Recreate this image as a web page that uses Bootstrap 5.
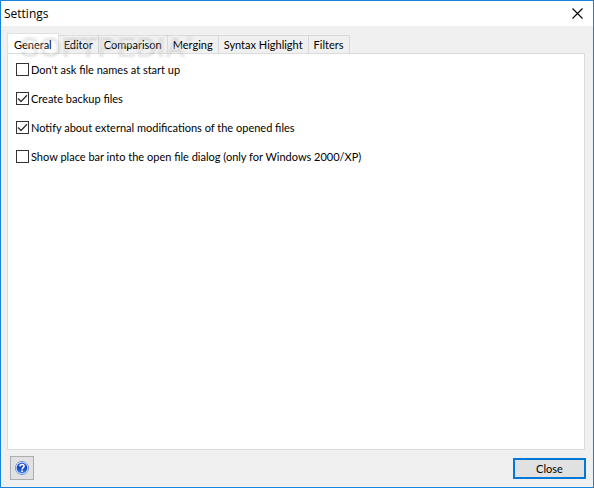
<!DOCTYPE html>
<html lang="en">
<head>
<meta charset="utf-8">
<meta name="viewport" content="width=device-width, initial-scale=1">
<title>Settings</title>
<link href="https://cdn.jsdelivr.net/npm/bootstrap@5.3.0/dist/css/bootstrap.min.css" rel="stylesheet">
<style>
body { font-family: Lato, Roboto, "Noto Sans", sans-serif; font-size: 11px; line-height: 13px; color: #000; }
.window { background: #f0f0f0; border: 1px solid #1883d7; }
.titlebar { height: 25px; padding-left: 3px; background: #fff; }
.titlebar h1 { font: 12px/16px "Open Sans", "Noto Sans", sans-serif; }
.title-close { width: 32px; height: 25px; }
.window-main { padding: 7px 8px 0 6px; }
.sheet-tabs { --bs-nav-tabs-border-width: 0; height: 20px; }
.sheet-tabs .nav-link { height: 18px; padding: 0 5px; font-size: 11px; line-height: 18px; color: #000; border: 1px solid #d9d9d9; border-left-width: 0; border-bottom: 0; border-radius: 0; margin: 0; background: #f0f0f0; }
.sheet-tabs .nav-link.active { height: 21px; padding: 0 6px; border-left-width: 1px; line-height: 17px; color: #000; background: #fff; }
.sheet { padding: 9px 8px; background: #fff; border: 1px solid #dcdcdc; gap: 16px; }
.option { gap: 2px; }
.option .form-check-input { width: 13px; height: 13px; margin: 0; border: 1px solid #333; border-radius: 0; background-color: #fff; box-shadow: none; flex: none; }
.option .form-check-input:checked { background-size: 11px 11px; background-image: url("data:image/svg+xml,%3Csvg xmlns='http://www.w3.org/2000/svg' viewBox='0 0 11 11'%3E%3Cpath d='M1 5.5 4 8.5 10 2.3' fill='none' stroke='%23333' stroke-width='1.3'/%3E%3C/svg%3E"); }
.window-footer { padding: 6px 7px 7px 9px; }
.help-btn { width: 24px; height: 24px; background: #e1e1e1; border: 1px solid #adadad; border-radius: 0; }
.close-btn { width: 73px; height: 21px; font-size: 11px; line-height: 13px; color: #000; background: #e1e1e1; border: 2px solid #0078d7; border-radius: 0; }
.watermark { left: 19px; top: 27px; font: bold 29px/34px "Liberation Sans", sans-serif; color: rgba(255,255,255,.25); text-shadow: 0 2px 2px rgba(0,0,0,.1); pointer-events: none; }
.watermark sup { font-size: 9px; top: -15px; }
</style>
<script src="https://cdn.jsdelivr.net/npm/bootstrap@5.3.0/dist/js/bootstrap.bundle.min.js" defer></script>
</head>
<body>
<div class="window d-flex flex-column min-vh-100 position-relative">
  <header class="titlebar d-flex align-items-center justify-content-between">
    <h1 class="m-0">Settings</h1>
    <button type="button" class="title-close btn p-0 border-0 rounded-0 d-flex align-items-center justify-content-center" aria-label="Close window">
      <svg width="11" height="11" viewBox="0 0 11 11" aria-hidden="true"><path d="M.5.5l10 10M10.5.5l-10 10" stroke="#000" stroke-width="1.1" fill="none"/></svg>
    </button>
  </header>
  <main class="window-main d-flex flex-column flex-grow-1">
    <div class="sheet-tabs nav nav-tabs flex-nowrap align-items-end" role="tablist">
      <button type="button" class="nav-link active align-self-start" role="tab" aria-selected="true" aria-controls="general" id="general-tab">General</button>
      <button type="button" class="nav-link" role="tab" aria-selected="false">Editor</button>
      <button type="button" class="nav-link" role="tab" aria-selected="false">Comparison</button>
      <button type="button" class="nav-link" role="tab" aria-selected="false">Merging</button>
      <button type="button" class="nav-link" role="tab" aria-selected="false">Syntax Highlight</button>
      <button type="button" class="nav-link" role="tab" aria-selected="false">Filters</button>
    </div>
    <section class="sheet d-flex flex-column flex-grow-1" id="general" role="tabpanel" aria-labelledby="general-tab">
      <div class="option d-flex align-items-center"><input class="form-check-input" type="checkbox" id="ask"><label for="ask">Don't ask file names at start up</label></div>
      <div class="option d-flex align-items-center"><input class="form-check-input" type="checkbox" id="backup" checked><label for="backup">Create backup files</label></div>
      <div class="option d-flex align-items-center"><input class="form-check-input" type="checkbox" id="notify" checked><label for="notify">Notify about external modifications of the opened files</label></div>
      <div class="option d-flex align-items-center"><input class="form-check-input" type="checkbox" id="placebar"><label for="placebar">Show place bar into the open file dialog (only for Windows 2000/XP)</label></div>
    </section>
  </main>
  <footer class="window-footer d-flex align-items-center justify-content-between">
    <button type="button" class="help-btn btn p-0 d-flex align-items-center justify-content-center" aria-label="Help">
      <svg width="14" height="14" viewBox="0 0 14 14" aria-hidden="true">
        <defs><linearGradient id="ball" x2="0" y2="1"><stop stop-color="#2e5fd0"/><stop offset=".5" stop-color="#1746bd"/><stop offset="1" stop-color="#3f86ee"/></linearGradient></defs>
        <circle cx="7" cy="7" r="6.6" fill="#e6efff" stroke="#5c86d8" stroke-width=".8"/>
        <circle cx="7" cy="7" r="5.4" fill="url(#ball)"/>
        <path d="M4.9 5.4C5 2.7 9.2 2.8 9.1 5.3 9 6.7 7.1 6.7 7.1 8.4" fill="none" stroke="#fff" stroke-width="1.5"/>
        <circle cx="7.1" cy="10.2" r=".9" fill="#fff"/>
      </svg>
    </button>
    <button type="button" class="close-btn btn p-0">Close</button>
  </footer>
  <div class="watermark position-absolute">SOFTPEDIA<sup>®</sup></div>
</div>
</body>
</html>
